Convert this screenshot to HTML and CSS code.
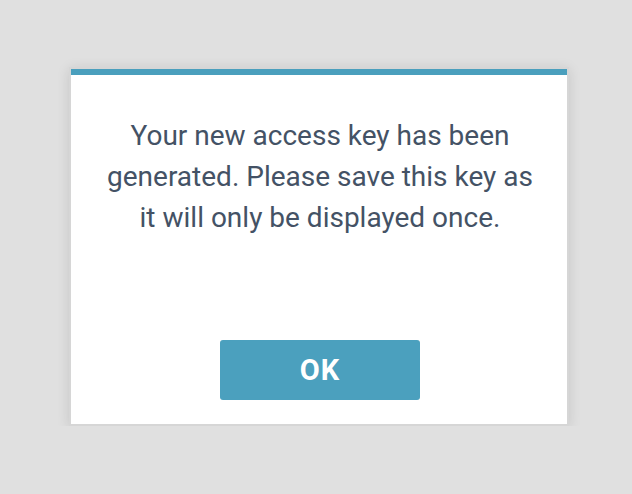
FILE: index.html
```html
<!DOCTYPE html>
<html lang="en">
<head>
<meta charset="utf-8">
<link rel="stylesheet" href="styles.css">
</head>
<body>
<div class="stage">
  <div class="dialog">
    <div class="dialog-bar"></div>
    <div class="dialog-body">
      <p class="message">Your new access key has been generated. Please save this key as it will only be displayed once.</p>
      <button class="ok-btn" type="button">OK</button>
    </div>
  </div>
</div>
</body>
</html>
```
FILE: styles.css
```css
html, body {
  margin: 0;
  padding: 0;
  background: #e0e0e0;
  font-family: Roboto, "Liberation Sans", sans-serif;
}
.stage {
  padding: 67px 0 0 69px;
}
.dialog {
  width: 496px;
  height: 355px;
  background: #ffffff;
  border: 2px solid #d6d6d6;
  box-shadow: 0 2px 12px rgba(0, 0, 0, 0.12);
  display: flex;
  flex-direction: column;
}
.dialog-bar {
  height: 6px;
  background: #4a9fbd;
  flex: none;
}
.dialog-body {
  flex: 1;
  display: flex;
  flex-direction: column;
  align-items: center;
  justify-content: space-between;
  padding: 40px 19px 24px 21px;
}
.message {
  margin: 0;
  font-size: 28px;
  line-height: 41px;
  color: #445265;
  text-align: center;
  max-width: 440px;
}
.ok-btn {
  width: 200px;
  height: 60px;
  border: none;
  border-radius: 3px;
  background: #4ba0be;
  color: #ffffff;
  font-family: Roboto, "Liberation Sans", sans-serif;
  font-weight: 700;
  font-size: 29px;
  letter-spacing: 1px;
  cursor: pointer;
}
```
